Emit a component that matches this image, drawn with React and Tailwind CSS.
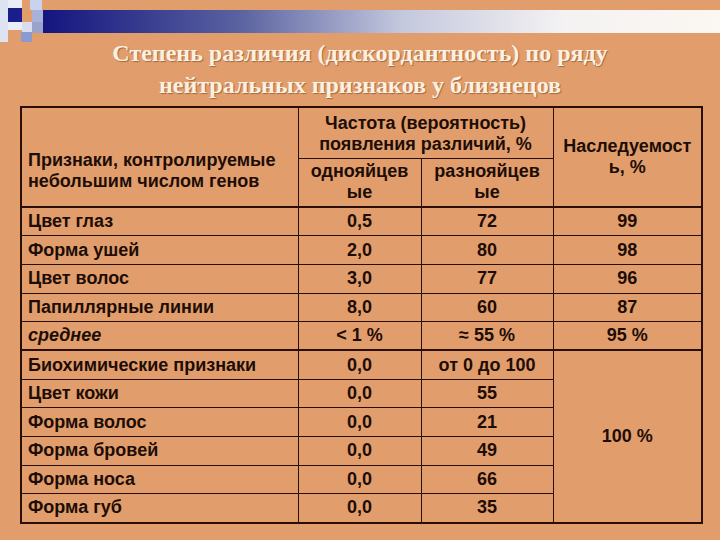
import React from "react";

const thin = "border border-[#2a0f06]";

function Deco() {
  return (
    <svg width="720" height="44" viewBox="0 0 720 44" className="block">
      <defs>
        <linearGradient id="bar" x1="0" y1="0" x2="1" y2="0">
          <stop offset="0" stopColor="#14157e" />
          <stop offset="0.29" stopColor="#5a62a0" />
          <stop offset="0.53" stopColor="#c4c8de" />
          <stop offset="0.77" stopColor="#f4f2f2" />
          <stop offset="1" stopColor="#fbf7f2" />
        </linearGradient>
      </defs>
      <rect x="0" y="0" width="22" height="30" fill="#e9edf6" />
      <rect x="0" y="0" width="8" height="42" fill="#dde3f1" />
      <rect x="8" y="8" width="14" height="14" fill="#1a1e8c" />
      <rect x="30" y="0" width="12" height="10" fill="#c9d2ee" />
      <rect x="32" y="10" width="21" height="12" fill="#a9b1d9" />
      <rect x="22" y="22" width="10" height="11" fill="#d9ddf1" />
      <rect x="21" y="32" width="11" height="10" fill="#8c9ad0" />
      <rect x="32" y="22" width="11" height="11" fill="#9aa3cc" />
      <rect x="43" y="10" width="677" height="23" fill="url(#bar)" />
    </svg>
  );
}

const rows1 = [
  ["Цвет глаз", "0,5", "72", "99"],
  ["Форма ушей", "2,0", "80", "98"],
  ["Цвет волос", "3,0", "77", "96"],
  ["Папиллярные линии", "8,0", "60", "87"],
];

const rows2 = [
  ["Биохимические признаки", "0,0", "от 0 до 100"],
  ["Цвет кожи", "0,0", "55"],
  ["Форма волос", "0,0", "21"],
  ["Форма бровей", "0,0", "49"],
  ["Форма носа", "0,0", "66"],
  ["Форма губ", "0,0", "35"],
];

export default function App() {
  return (
    <div
      className="w-[720px] h-[540px] bg-[#e19e6c] overflow-hidden text-[#1e0d06]"
      style={{ fontFamily: '"Liberation Sans", Arial, sans-serif' }}
    >
      <Deco />
      <div
        className="text-center text-[#fbf1e2] font-bold text-[24px] leading-[32px] [text-shadow:1px_1px_1px_rgba(90,40,10,0.45)] -mt-[7px]"
        style={{ fontFamily: '"Liberation Serif", "Times New Roman", serif' }}
      >
        <div>Степень различия (дискордантность) по ряду</div>
        <div>нейтральных признаков у близнецов</div>
      </div>
      <table className="ml-[20px] mt-[5px] border-collapse border-2 border-[#2a0f06] text-[18px] font-bold leading-[21px] w-[681px] table-fixed">
        <colgroup>
          <col className="w-[277px]" />
          <col className="w-[123px]" />
          <col className="w-[132px]" />
          <col className="w-[149px]" />
        </colgroup>
        <tbody>
          <tr className="h-[51px]">
            <td rowSpan={2} className={`${thin} border-b-2 px-[6px] pt-[28px] align-middle text-left`}>
              Признаки, контролируемые
              <br />
              небольшим числом генов
            </td>
            <td colSpan={2} className={`${thin} text-center align-middle pt-[2px]`}>
              Частота (вероятность)
              <br />
              появления различий, %
            </td>
            <td rowSpan={2} className={`${thin} border-b-2 text-center align-middle`}>
              Наследуемост
              <br />
              ь, %
            </td>
          </tr>
          <tr className="h-[49px]">
            <td className={`${thin} border-b-2 text-center align-middle`}>
              однояйцев
              <br />
              ые
            </td>
            <td className={`${thin} border-b-2 text-center align-middle`}>
              разнояйцев
              <br />
              ые
            </td>
          </tr>
          {rows1.map((r) => (
            <tr key={r[0]} className="h-[28.7px]">
              <td className={`${thin} px-[6px] py-0`}>{r[0]}</td>
              <td className={`${thin} text-center py-0`}>{r[1]}</td>
              <td className={`${thin} text-center py-0`}>{r[2]}</td>
              <td className={`${thin} text-center py-0`}>{r[3]}</td>
            </tr>
          ))}
          <tr className="h-[28.7px]">
            <td className={`${thin} border-b-2 px-[6px] py-0 italic`}>среднее</td>
            <td className={`${thin} border-b-2 text-center py-0`}>&lt; 1 %</td>
            <td className={`${thin} border-b-2 text-center py-0`}>≈ 55 %</td>
            <td className={`${thin} border-b-2 text-center py-0`}>95 %</td>
          </tr>
          {rows2.map((r, i) => (
            <tr key={r[0]} className="h-[28.7px]">
              <td className={`${thin} px-[6px] py-0`}>{r[0]}</td>
              <td className={`${thin} text-center py-0`}>{r[1]}</td>
              <td className={`${thin} text-center py-0`}>{r[2]}</td>
              {i === 0 && (
                <td rowSpan={6} className={`${thin} text-center align-middle`}>
                  100 %
                </td>
              )}
            </tr>
          ))}
        </tbody>
      </table>
    </div>
  );
}
